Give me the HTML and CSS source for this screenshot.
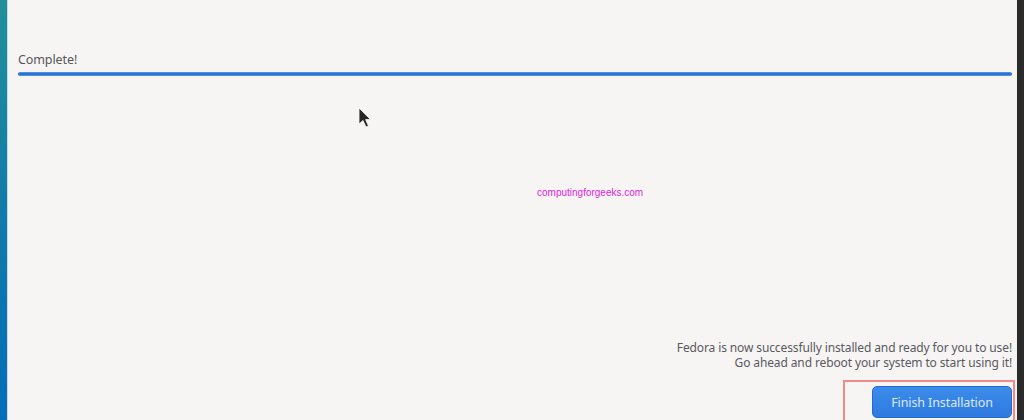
FILE: index.html
```html
<!DOCTYPE html>
<html>
<head>
<meta charset="utf-8">
<link rel="stylesheet" href="styles.css">
</head>
<body>
<div class="screen">
  <div class="edge-left"></div>
  <main class="content">
    <div class="progress-label">Complete!</div>
    <div class="progress-track"><div class="progress-fill"></div></div>
    <div class="spacer"></div>
    <div class="message">
      <p>Fedora is now successfully installed and ready for you to use!</p>
      <p>Go ahead and reboot your system to start using it!</p>
    </div>
    <div class="actions">
      <div class="highlight"></div>
      <button class="finish">Finish Installation</button>
    </div>
    <div class="watermark">computingforgeeks.com</div>
    <svg class="cursor" width="14" height="22" viewBox="0 0 14 22">
      <path d="M1 1 L1 17 L5 13.5 L8 20 L10.5 19 L7.6 12.6 L12.5 12.6 Z" fill="#111" stroke="#fff" stroke-width="0.8" opacity="0.9"/>
    </svg>
  </main>
  <div class="edge-right"></div>
</div>
</body>
</html>
```
FILE: styles.css
```css
html, body {
  margin: 0;
  padding: 0;
  background: #f6f5f4;
}
.screen {
  display: flex;
  width: 1024px;
  height: 420px;
  overflow: hidden;
  font-family: "Noto Sans", "DejaVu Sans", sans-serif;
}
.edge-left {
  width: 7px;
  flex: none;
  background: linear-gradient(to bottom, #21909a 0%, #117ea8 45%, #036db9 100%);
  border-right: 1px solid #c7d9e4;
}
.edge-right {
  width: 7px;
  flex: none;
  background: #2a2a2a;
}
.content {
  position: relative;
  flex: 1;
  display: flex;
  flex-direction: column;
  padding: 52px 5px 0 10px;
  background: #f6f5f4;
}
.progress-label {
  font-size: 12.5px;
  color: #56555a;
  line-height: 15px;
  letter-spacing: -0.1px;
}
.progress-track {
  margin-top: 5px;
  height: 4px;
  border-radius: 2px;
  background: #4d8fe0;
}
.progress-fill {
  margin: 1px 0;
  height: 2px;
  background: #2f73d2;
  border-radius: 1px;
}
.spacer {
  flex: 1;
}
.message {
  text-align: right;
  font-size: 12px;
  line-height: 15px;
  color: #5a595e;
  letter-spacing: -0.12px;
  margin-bottom: 1px;
}
.message p {
  margin: 0;
}
.actions {
  position: relative;
  display: flex;
  justify-content: flex-end;
  margin-top: 15px;
  height: 34px;
}
.highlight {
  position: absolute;
  right: -3px;
  top: -6px;
  width: 172px;
  height: 46px;
  border: 2px solid #f2888c;
  box-sizing: border-box;
}
.finish {
  width: 140px;
  height: 32px;
  border: 1px solid #1f6bd1;
  border-radius: 5px;
  background: linear-gradient(to bottom, #3c8cea, #2e7ae0);
  color: #dde7f5;
  font-family: "Noto Sans", "DejaVu Sans", sans-serif;
  font-size: 12.5px;
  padding: 0;
  letter-spacing: -0.1px;
}
.watermark {
  position: absolute;
  left: 529px;
  top: 187px;
  font-family: "Liberation Sans", Arial, sans-serif;
  font-size: 10px;
  color: #e21ee0;
}
.cursor {
  position: absolute;
  left: 350px;
  top: 107px;
}
```
